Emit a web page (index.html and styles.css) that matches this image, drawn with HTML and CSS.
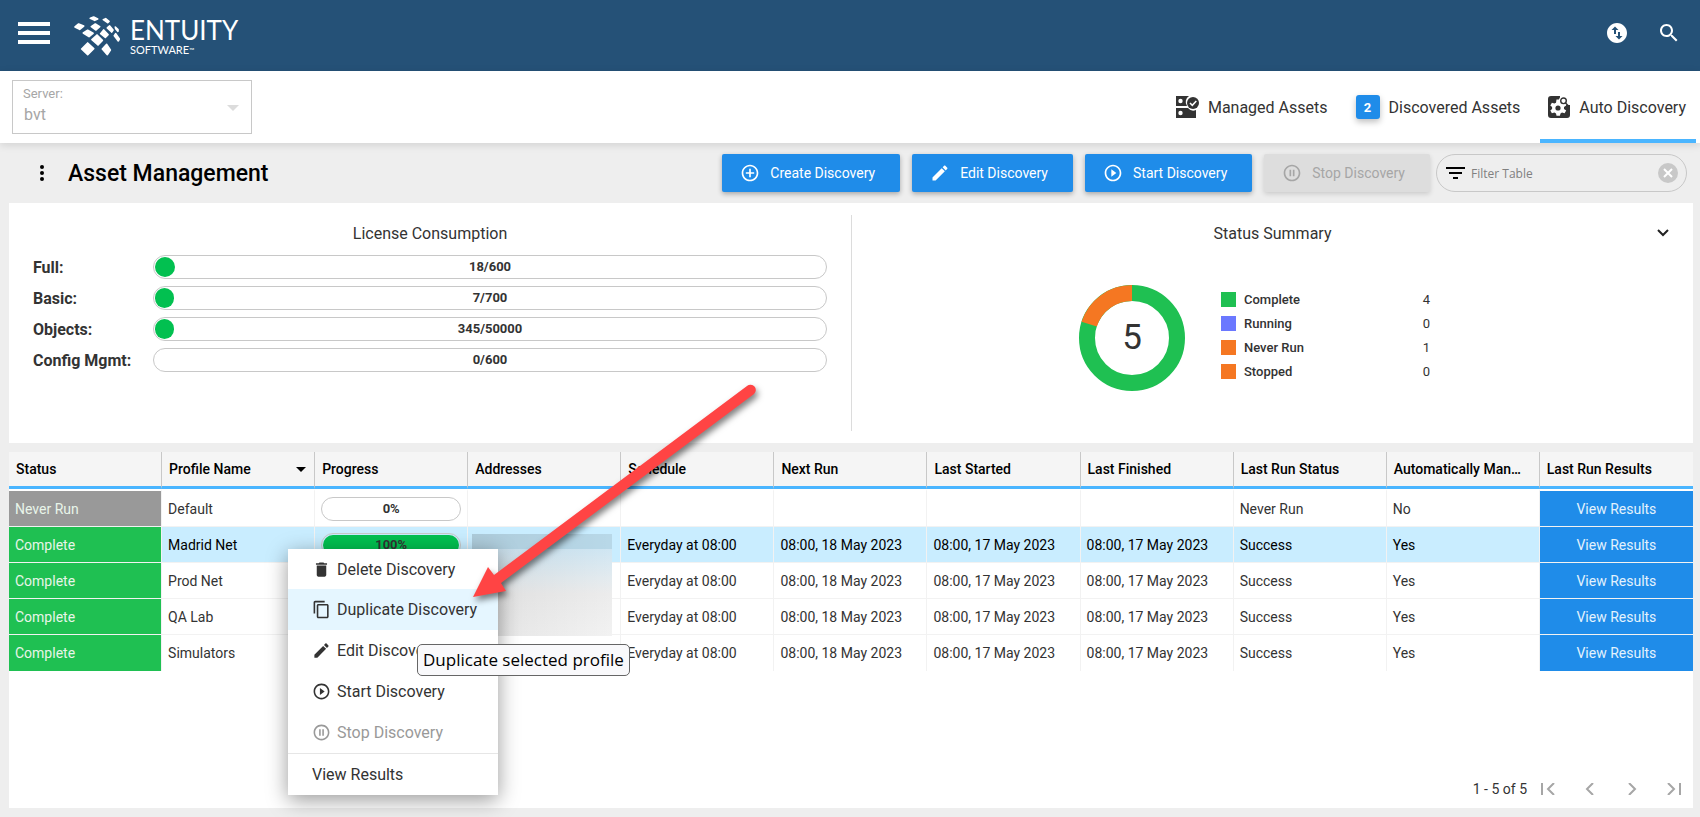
FILE: index.html
```html
<!DOCTYPE html>
<html lang="en">
<head>
    <meta charset="UTF-8">
    <meta name="viewport" content="width=device-width, initial-scale=1.0">
    <title>Entuity - Asset Management</title>
    <link rel="stylesheet" href="styles.css">
</head>
<body>

    <!-- icons used more than once -->
    <svg class="sprite" width="0" height="0">
        <symbol id="icon-play" viewBox="0 0 24 24"><path d="M10 16.5l6-4.5-6-4.5v9zM12 2C6.48 2 2 6.48 2 12s4.48 10 10 10 10-4.48 10-10S17.52 2 12 2zm0 18c-4.41 0-8-3.59-8-8s3.59-8 8-8 8 3.59 8 8-3.59 8-8 8z"/></symbol>
        <symbol id="icon-pause" viewBox="0 0 24 24"><path d="M9 16h2V8H9v8zm3-14C6.48 2 2 6.48 2 12s4.48 10 10 10 10-4.48 10-10S17.52 2 12 2zm0 18c-4.41 0-8-3.59-8-8s3.59-8 8-8 8 3.59 8 8-3.59 8-8 8zm1-4h2V8h-2v8z"/></symbol>
        <symbol id="icon-edit" viewBox="0 0 24 24"><path d="M3 17.25V21h3.75L17.81 9.94l-3.75-3.75L3 17.25zM20.71 7.04c.39-.39.39-1.02 0-1.41l-2.34-2.34c-.39-.39-1.02-.39-1.41 0l-1.83 1.83 3.75 3.75 1.83-1.83z"/></symbol>
    </svg>

    <header class="topbar">
        <button class="icon-button" aria-label="Menu">
            <svg width="32" height="22" viewBox="0 0 32 22"><path d="M0 0h32v4H0zM0 9h32v4H0zM0 18h32v4H0z"/></svg>
        </button>
        <a class="logo" href="#">
            <svg class="logo-mark" width="46" height="40" viewBox="221 46 138 120">
                <path d="M262 127l18 17-18 18-18-17zM319 131l11 17-9 14-15-17zM290 103l16 16-13 14-18-16zM262 89l16 9-12 10-17-11zM310 88l13 14-8 8-14-11zM235 70l15 6-12 10-14-7zM285 70l13 8-11 10-14-10zM328 76l10 12-4 6-13-12zM280 49l12 6-9 4-13-6zM316 54l10 8-4 4-13-9zM345 79l8 8v5l-7-8zM346 99l11 16-3 6-12-16z"/>
            </svg>
            <span class="logo-text">
                <span class="logo-name">ENTUITY</span>
                <span class="logo-sub">SOFTWARE<span class="logo-tm">™</span></span>
            </span>
        </a>
        <div class="topbar-actions">
            <button class="icon-button" aria-label="Transfers">
                <svg width="24" height="24" viewBox="0 0 24 24"><path d="M12 2C6.48 2 2 6.48 2 12s4.48 10 10 10 10-4.48 10-10S17.52 2 12 2zM6.5 9L10 5.5 13.5 9H11v4H9V9H6.5zM17.5 15L14 18.5 10.5 15H13v-4h2v4h2.5z"/></svg>
            </button>
            <button class="icon-button" aria-label="Search">
                <svg width="24" height="24" viewBox="0 0 24 24"><path d="M15.5 14h-.79l-.28-.27C15.41 12.59 16 11.11 16 9.5 16 5.91 13.09 3 9.5 3S3 5.91 3 9.5 5.91 16 9.5 16c1.61 0 3.09-.59 4.23-1.57l.27.28v.79l5 4.99L20.49 19l-4.99-5zm-6 0C7.01 14 5 11.99 5 9.5S7.01 5 9.5 5 14 7.01 14 9.5 11.99 14 9.5 14z"/></svg>
            </button>
        </div>
    </header>

    <nav class="subbar">
        <div class="server">
            <label for="server">Server:</label>
            <select id="server" disabled>
                <option>bvt</option>
            </select>
        </div>
        <div class="tabs">
            <a class="tab" href="#">
                <svg width="23" height="22" viewBox="0 0 23 22">
                    <path d="M0 0h13a7 7 0 0 0-2 10H0zM0 12h12a7 7 0 0 0 8 2v8H0z"/>
                    <circle cx="4.5" cy="5" r="2.2" fill="#fff"/><circle cx="4.5" cy="17" r="2.2" fill="#fff"/>
                    <circle cx="17" cy="7" r="6"/><path d="M14 7l2.3 2.3L20.3 5" fill="none" stroke="#fff" stroke-width="1.5"/>
                </svg>
                Managed Assets
            </a>
            <a class="tab" href="#"><span class="badge">2</span>Discovered Assets</a>
            <a class="tab active" href="#">
                <svg width="22" height="22" viewBox="0 0 22 22">
                    <path d="M3 0h9v9h10v10a3 3 0 0 1-3 3H3a3 3 0 0 1-3-3V3a3 3 0 0 1 3-3z"/>
                    <path fill="#fff" d="M8.500 3.500h3l.5 2.300 1.600.9 2.200-.9 2.400 3.700-2.200 1.600v1.800l2.200 1.600-1.600 2.800-2.600-.8-1.500 1-.6 2.200H8.500L8 17.400l-1.600-.9-2.500.8-1.600-2.800 1.800-1.600v-1.800L2.300 9.500l1.600-2.700 2.500.8L8 6.800z"/>
                    <circle cx="10" cy="12" r="2.600"/>
                    <circle cx="15.500" cy="4.800" r="4.800" fill="#fff"/>
                    <circle cx="15.500" cy="4.800" r="2.800" fill="none" stroke="#333" stroke-width="1.400"/>
                    <path d="M17.500 7l3.500 3.500" stroke="#333" stroke-width="1.400"/>
                </svg>
                Auto Discovery
            </a>
        </div>
    </nav>

    <main>
        <div class="toolbar">
            <button class="icon-button more" aria-label="More">
                <svg width="6" height="18" viewBox="0 0 6 18"><circle cx="3" cy="3" r="2"/><circle cx="3" cy="9" r="2"/><circle cx="3" cy="15" r="2"/></svg>
            </button>
            <h1>Asset Management</h1>
            <div class="buttons">
                <button class="btn">
                    <svg viewBox="0 0 24 24"><path d="M13 7h-2v4H7v2h4v4h2v-4h4v-2h-4V7zm-1-5C6.48 2 2 6.48 2 12s4.48 10 10 10 10-4.48 10-10S17.52 2 12 2zm0 18c-4.41 0-8-3.59-8-8s3.59-8 8-8 8 3.59 8 8-3.59 8-8 8z"/></svg>
                    Create Discovery
                </button>
                <button class="btn"><svg><use href="#icon-edit"/></svg>Edit Discovery</button>
                <button class="btn"><svg><use href="#icon-play"/></svg>Start Discovery</button>
                <button class="btn" disabled><svg><use href="#icon-pause"/></svg>Stop Discovery</button>
            </div>
            <div class="filter">
                <svg width="19" height="12" viewBox="0 0 19 12"><path d="M0 0h19v2H0zM3 5h13v2H3zM7 10h5v2H7z"/></svg>
                <input type="text" placeholder="Filter Table" aria-label="Filter Table">
                <button class="icon-button clear" aria-label="Clear filter">
                    <svg width="20" height="20" viewBox="0 0 20 20"><circle cx="10" cy="10" r="10"/><path d="M6 6l8 8M14 6l-8 8" stroke="#fff" stroke-width="2"/></svg>
                </button>
            </div>
        </div>

        <section class="summary">
            <div class="license">
                <h2>License Consumption</h2>
                <div class="license-row">
                    <span class="license-name">Full:</span>
                    <div class="bar"><div class="bar-fill" style="width: 3%"></div><span>18/600</span></div>
                </div>
                <div class="license-row">
                    <span class="license-name">Basic:</span>
                    <div class="bar"><div class="bar-fill" style="width: 1%"></div><span>7/700</span></div>
                </div>
                <div class="license-row">
                    <span class="license-name">Objects:</span>
                    <div class="bar"><div class="bar-fill" style="width: 0.7%"></div><span>345/50000</span></div>
                </div>
                <div class="license-row">
                    <span class="license-name">Config Mgmt:</span>
                    <div class="bar"><span>0/600</span></div>
                </div>
            </div>
            <div class="status">
                <h2>Status Summary</h2>
                <button class="icon-button collapse" aria-label="Collapse">
                    <svg width="12" height="8" viewBox="0 0 12 8"><path d="M1 1l5 5 5-5" fill="none" stroke="#222" stroke-width="2"/></svg>
                </button>
                <div class="status-body">
                    <div class="donut">
                        <svg width="106" height="106" viewBox="0 0 106 106">
                            <circle class="arc-complete" cx="53" cy="53" r="45"/>
                            <circle class="arc-never" cx="53" cy="53" r="45" pathLength="100" stroke-dasharray="20 80" stroke-dashoffset="-80" transform="rotate(-90 53 53)"/>
                        </svg>
                        <span>5</span>
                    </div>
                    <ul class="legend">
                        <li><i class="swatch complete"></i><b>Complete</b><span>4</span></li>
                        <li><i class="swatch running"></i><b>Running</b><span>0</span></li>
                        <li><i class="swatch never"></i><b>Never Run</b><span>1</span></li>
                        <li><i class="swatch never"></i><b>Stopped</b><span>0</span></li>
                    </ul>
                </div>
            </div>
        </section>

        <section class="grid">
            <table>
                <thead>
                    <tr>
                        <th>Status</th>
                        <th class="sorted">Profile Name</th>
                        <th>Progress</th>
                        <th>Addresses</th>
                        <th>Schedule</th>
                        <th>Next Run</th>
                        <th>Last Started</th>
                        <th>Last Finished</th>
                        <th>Last Run Status</th>
                        <th title="Automatically Managed">Automatically Managed</th>
                        <th>Last Run Results</th>
                    </tr>
                </thead>
                <tbody>
                    <tr>
                        <td class="state never-run">Never Run</td>
                        <td>Default</td>
                        <td><div class="bar"><span>0%</span></div></td>
                        <td></td>
                        <td></td>
                        <td></td>
                        <td></td>
                        <td></td>
                        <td>Never Run</td>
                        <td>No</td>
                        <td class="action"><button>View Results</button></td>
                    </tr>
                    <tr class="selected">
                        <td class="state">Complete</td>
                        <td>Madrid Net</td>
                        <td><div class="bar"><div class="bar-fill" style="width: 100%"></div><span>100%</span></div></td>
                        <td></td>
                        <td>Everyday at 08:00</td>
                        <td>08:00, 18 May 2023</td>
                        <td>08:00, 17 May 2023</td>
                        <td>08:00, 17 May 2023</td>
                        <td>Success</td>
                        <td>Yes</td>
                        <td class="action"><button>View Results</button></td>
                    </tr>
                    <tr>
                        <td class="state">Complete</td>
                        <td>Prod Net</td>
                        <td></td>
                        <td></td>
                        <td>Everyday at 08:00</td>
                        <td>08:00, 18 May 2023</td>
                        <td>08:00, 17 May 2023</td>
                        <td>08:00, 17 May 2023</td>
                        <td>Success</td>
                        <td>Yes</td>
                        <td class="action"><button>View Results</button></td>
                    </tr>
                    <tr>
                        <td class="state">Complete</td>
                        <td>QA Lab</td>
                        <td></td>
                        <td></td>
                        <td>Everyday at 08:00</td>
                        <td>08:00, 18 May 2023</td>
                        <td>08:00, 17 May 2023</td>
                        <td>08:00, 17 May 2023</td>
                        <td>Success</td>
                        <td>Yes</td>
                        <td class="action"><button>View Results</button></td>
                    </tr>
                    <tr>
                        <td class="state">Complete</td>
                        <td>Simulators</td>
                        <td></td>
                        <td></td>
                        <td>Everyday at 08:00</td>
                        <td>08:00, 18 May 2023</td>
                        <td>08:00, 17 May 2023</td>
                        <td>08:00, 17 May 2023</td>
                        <td>Success</td>
                        <td>Yes</td>
                        <td class="action"><button>View Results</button></td>
                    </tr>
                </tbody>
            </table>

            <div class="pager">
                <span>1 - 5 of 5</span>
                <button class="icon-button" aria-label="First page"><svg width="14" height="12" viewBox="0 0 14 12"><path d="M1 0v12M13 0L7 6l6 6"/></svg></button>
                <button class="icon-button" aria-label="Previous page"><svg width="14" height="12" viewBox="0 0 14 12"><path d="M10 0L4 6l6 6"/></svg></button>
                <button class="icon-button" aria-label="Next page"><svg width="14" height="12" viewBox="0 0 14 12"><path d="M4 0l6 6-6 6"/></svg></button>
                <button class="icon-button" aria-label="Last page"><svg width="14" height="12" viewBox="0 0 14 12"><path d="M1 0l6 6-6 6M13 0v12"/></svg></button>
            </div>

            <div class="redacted"></div>

            <div class="menu">
                <button><svg viewBox="0 0 24 24"><path d="M6 19c0 1.1.9 2 2 2h8c1.1 0 2-.9 2-2V7H6v12zM19 4h-3.5l-1-1h-5l-1 1H5v2h14V4z"/></svg>Delete Discovery</button>
                <button class="hover"><svg viewBox="0 0 24 24"><path d="M16 1H4c-1.1 0-2 .9-2 2v14h2V3h12V1zm3 4H8c-1.1 0-2 .9-2 2v14c0 1.1.9 2 2 2h11c1.1 0 2-.9 2-2V7c0-1.1-.9-2-2-2zm0 16H8V7h11v14z"/></svg>Duplicate Discovery</button>
                <button><svg><use href="#icon-edit"/></svg>Edit Discovery</button>
                <button><svg><use href="#icon-play"/></svg>Start Discovery</button>
                <button disabled><svg><use href="#icon-pause"/></svg>Stop Discovery</button>
                <button class="divided">View Results</button>
            </div>

            <div class="tooltip" role="tooltip">Duplicate selected profile</div>

            <svg class="arrow" width="300" height="230" viewBox="466 376 300 230">
                <path d="M473 597l15-30 6 8L747 386a5 5 0 0 1 7 8L501 583l5 8z"/>
            </svg>
        </section>
    </main>

</body>
</html>
```

FILE: styles.css
```css
* {
    box-sizing: border-box;
}
body {
    margin: 0;
    min-height: 100vh;
    display: flex;
    flex-direction: column;
    background: #eeeeee;
    color: #333;
    font-family: Roboto, sans-serif;
    font-size: 14px;
}
button, input, select {
    font: inherit;
    color: inherit;
}
button {
    border: none;
    background: none;
    padding: 0;
    cursor: pointer;
}
a {
    color: inherit;
    text-decoration: none;
}
.sprite {
    position: absolute;
}
.icon-button {
    display: flex;
    align-items: center;
    justify-content: center;
}

/* top bar */
.topbar {
    display: flex;
    align-items: center;
    height: 71px;
    padding: 0 19px 6px 18px;
    background: #255177;
    color: white;
}
.topbar svg {
    fill: white;
}
.logo {
    display: flex;
    align-items: center;
    gap: 10px;
    margin-left: 24px;
    padding-top: 6px;
}
.logo-mark {
    stroke: white;
    stroke-width: 5px;
    stroke-linejoin: round;
}
.logo-text {
    display: flex;
    flex-direction: column;
    font-family: Lato, sans-serif;
}
.logo-name {
    font-size: 26px;
    line-height: 28px;
}
.logo-sub {
    font-size: 11px;
    line-height: 12px;
}
.logo-tm {
    font-size: 7px;
    vertical-align: top;
}
.topbar-actions {
    display: flex;
    gap: 28px;
    margin-left: auto;
}

/* server and tabs */
.subbar {
    position: relative;
    display: flex;
    justify-content: space-between;
    height: 72px;
    padding: 0 4px 0 12px;
    background: white;
    box-shadow: 0 2px 8px rgba(0, 0, 0, 0.12);
}
.server {
    position: relative;
    display: flex;
    flex-direction: column;
    width: 240px;
    height: 54px;
    margin-top: 9px;
    padding: 4px 10px;
    border: 1px solid #c8c8c8;
    color: #a6a6a6;
}
.server label {
    font-size: 13px;
    line-height: 18px;
}
.server select {
    appearance: none;
    border: none;
    background: none;
    padding: 0 1px;
    font-size: 16px;
    line-height: 24px;
    opacity: 1;
}
.server::after {
    content: "";
    position: absolute;
    right: 12px;
    top: 24px;
    border: 6px solid transparent;
    border-top-color: #dcdcdc;
    border-bottom: none;
}
.tabs {
    display: flex;
    gap: 10px;
}
.tab {
    display: flex;
    align-items: center;
    gap: 9px;
    padding: 4px 10px 0 8px;
    border-bottom: 4px solid transparent;
    font-size: 16px;
}
.tab svg {
    fill: #333;
}
.tab.active {
    border-color: #4ab5ff;
}
.badge {
    width: 24px;
    height: 24px;
    border-radius: 3px;
    background: #1f8ce9;
    color: white;
    font-size: 13px;
    font-weight: bold;
    line-height: 26px;
    text-align: center;
    box-shadow: 0 3px 6px rgba(0, 0, 0, 0.25);
}

/* page */
main {
    flex: 1;
    display: flex;
    flex-direction: column;
    padding: 0 7px 9px 9px;
}
.toolbar {
    display: flex;
    align-items: center;
    height: 60px;
    padding-right: 6px;
}
.more {
    width: 18px;
    margin-left: 24px;
}
h1 {
    margin: 0 auto 0 17px;
    color: black;
    font-size: 23px;
    font-weight: 500;
}
.buttons {
    display: flex;
    gap: 12px;
    margin-right: 6px;
}
.btn {
    display: flex;
    align-items: center;
    gap: 10px;
    height: 38px;
    padding: 0 25px 0 18px;
    border-radius: 2px;
    background: #1f8ce9;
    color: white;
    box-shadow: 0 2px 5px rgba(0, 0, 0, 0.3);
}
.btn svg {
    width: 20px;
    height: 20px;
    fill: currentColor;
}
.btn:disabled {
    background: #dddddd;
    color: #a6a6a6;
    box-shadow: 0 2px 5px rgba(0, 0, 0, 0.15);
}
.filter {
    display: flex;
    align-items: center;
    gap: 6px;
    width: 251px;
    height: 38px;
    padding: 0 8px 0 9px;
    border: 1px solid #c8c8c8;
    border-radius: 19px;
}
.filter input {
    flex: 1;
    min-width: 0;
    padding: 0;
    border: none;
    background: none;
    font-family: "Open Sans", sans-serif;
    font-size: 12px;
}
.filter input::placeholder {
    color: #808080;
}
.clear {
    fill: #c8c8c8;
}

/* summary panel */
.summary {
    display: grid;
    grid-template-columns: calc(50% + 1px) 1fr;
    height: 240px;
    margin-bottom: 9px;
    padding: 12px 0;
    background: white;
}
h2 {
    margin: 8px 0;
    font-size: 16px;
    font-weight: normal;
    line-height: 22px;
    text-align: center;
}
.license {
    padding: 0 24px;
    border-right: 1px solid #dcdcdc;
}
.license-row {
    display: flex;
    align-items: center;
    height: 24px;
    margin-bottom: 7px;
}
.license h2 {
    margin-bottom: 10px;
}
.license-name {
    width: 120px;
    font-size: 16px;
    font-weight: bold;
}
.bar {
    position: relative;
    flex: 1;
    height: 24px;
    padding: 1px;
    border: 1px solid #c8c8c8;
    border-radius: 12px;
    font-size: 13px;
    font-weight: bold;
    line-height: 22px;
    text-align: center;
}
.bar span {
    position: absolute;
    inset: 0;
}
.bar-fill {
    min-width: 19px;
    height: 20px;
    border-radius: 10px;
    background: #02c050;
}
.status {
    position: relative;
}
.collapse {
    position: absolute;
    right: 24px;
    top: 14px;
}
.status-body {
    display: flex;
    align-items: center;
    justify-content: center;
    gap: 36px;
    height: 170px;
    margin-right: 36px;
}
.donut {
    position: relative;
    height: 106px;
}
.donut circle {
    fill: none;
    stroke-width: 16px;
}
.donut .arc-complete {
    stroke: #1fc052;
}
.donut .arc-never {
    stroke: #f57722;
}
.donut span {
    position: absolute;
    inset: 0;
    font-size: 35px;
    line-height: 106px;
    text-align: center;
}
.legend {
    list-style: none;
    margin: 0 0 6px;
    padding: 0;
    font-size: 13px;
}
.legend li {
    display: flex;
    align-items: center;
    width: 209px;
    height: 24px;
}
.legend b {
    flex: 1;
    font-weight: 500;
}
.swatch {
    width: 15px;
    height: 15px;
    margin-right: 8px;
}
.complete {
    background: #1fc052;
}
.running {
    background: #6b78ff;
}
.never {
    background: #f57722;
}

/* table */
.grid {
    position: relative;
    flex: 1;
    display: flex;
    flex-direction: column;
    background: white;
}
table {
    width: 100%;
    table-layout: fixed;
    border-collapse: separate;
    border-spacing: 0;
}
th {
    position: relative;
    height: 37px;
    padding: 0 12px 0 7px;
    border-right: 1px solid #c8c8c8;
    border-bottom: 3px solid #4ab5ff;
    background: #f5f5f5;
    color: black;
    font-weight: 500;
    text-align: left;
    white-space: nowrap;
    overflow: hidden;
    text-overflow: ellipsis;
}
.sorted::after {
    content: "";
    position: absolute;
    right: 8px;
    top: 15px;
    border: 5px solid transparent;
    border-top-color: black;
    border-bottom: none;
}
td {
    height: 36px;
    padding: 0 6px;
    border-right: 1px solid #f2f2f2;
    border-bottom: 1px solid #f2f2f2;
    white-space: nowrap;
}
th:last-child, td:last-child {
    border-right: none;
}
tbody tr:first-child td {
    height: 38px;
    border-top: 2px solid white;
}
tbody tr:last-child td {
    border-bottom: none;
}
.selected td {
    background: #c9edff;
    color: black;
}
.selected .bar {
    color: #333;
}
.state, .selected .state {
    background: #1fc052;
    color: #e8f5e9;
}
.never-run {
    background: #999999;
}
.action, .selected .action {
    padding: 0;
    background: #1f8ce9;
    color: #e3f2fd;
}
.action button {
    display: block;
    width: 100%;
    height: 35px;
}
.pager {
    display: flex;
    align-items: center;
    justify-content: flex-end;
    gap: 28px;
    height: 38px;
    margin-top: auto;
    padding-right: 12px;
}
.pager span {
    margin-right: -14px;
}
.pager path {
    fill: none;
    stroke: #a6a6a6;
    stroke-width: 2px;
}

/* things that float over the table */
.redacted {
    position: absolute;
    left: 463px;
    top: 82px;
    width: 140px;
    height: 102px;
    background: linear-gradient(to right, rgba(0, 0, 0, 0.06), transparent), linear-gradient(#b8d8e8, #b8d8e8 15px, #cfe6f3 15px, #e4ebef 45px, #ececec 60px, #f2f2f2);
}
.menu {
    position: absolute;
    left: 279px;
    top: 97px;
    width: 210px;
    padding-bottom: 1px;
    background: white;
    box-shadow: 0 5px 20px rgba(0, 0, 0, 0.4);
}
.menu button {
    display: flex;
    align-items: center;
    gap: 6px;
    width: 100%;
    height: 41px;
    padding: 0 20px 0 24px;
    font-size: 16px;
    white-space: nowrap;
}
.menu button:first-child {
    height: 40px;
}
.menu svg {
    width: 19px;
    height: 19px;
    fill: currentColor;
}
.menu .hover {
    background: #e5f6ff;
}
.menu button:disabled {
    color: #999;
}
.menu .divided {
    border-top: 1px solid #e6e6e6;
}
.tooltip {
    position: absolute;
    left: 408px;
    top: 192px;
    padding: 0 5px;
    border: 1px solid #666;
    border-radius: 5px;
    background: #f9f9fb;
    color: black;
    font-family: "Open Sans", sans-serif;
    font-size: 17px;
    line-height: 30px;
    white-space: nowrap;
}
.arrow {
    position: absolute;
    left: 457px;
    top: -76px;
    fill: #ff4444;
    filter: drop-shadow(2px 4px 3px rgba(0, 0, 0, 0.5));
    pointer-events: none;
}
```
